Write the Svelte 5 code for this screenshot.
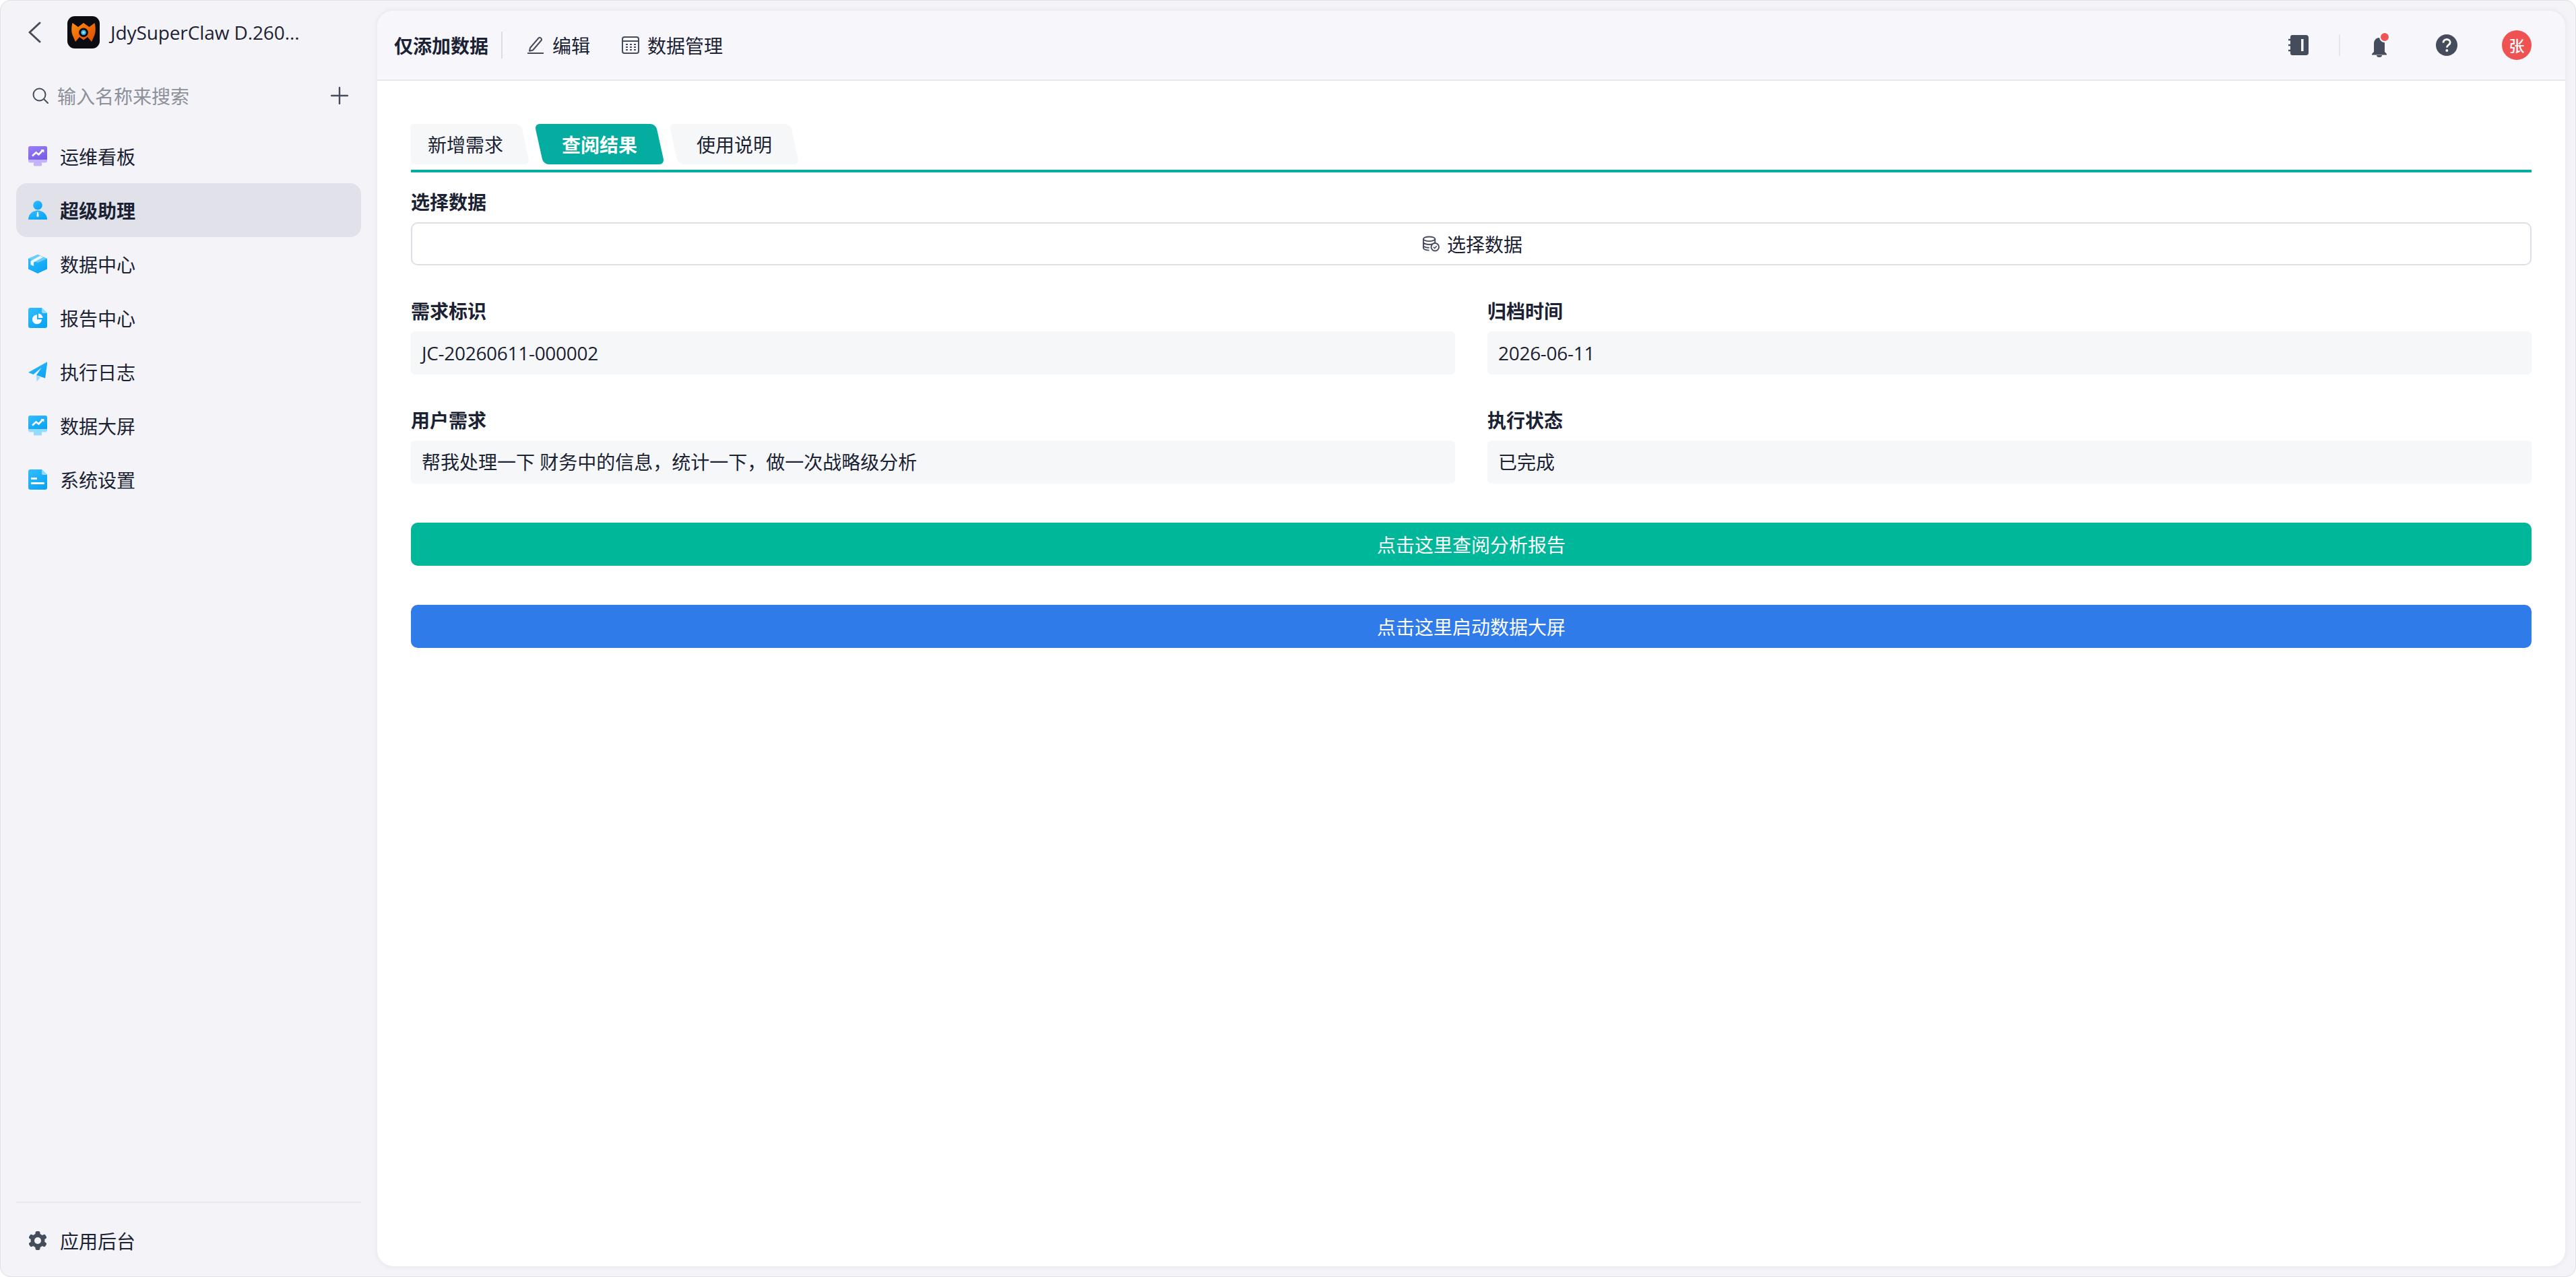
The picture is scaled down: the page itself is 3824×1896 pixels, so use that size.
<script>
  const nav = [
    { name: "运维看板", icon: "monitorPurple" },
    { name: "超级助理", icon: "person", active: true },
    { name: "数据中心", icon: "box" },
    { name: "报告中心", icon: "report" },
    { name: "执行日志", icon: "plane" },
    { name: "数据大屏", icon: "monitorBlue" },
    { name: "系统设置", icon: "doc" },
  ];
  const tabs = ["新增需求", "查阅结果", "使用说明"];
  let activeTab = $state(1);
</script>

{#snippet navIcon(kind)}
  <svg class="nav-icon" viewBox="0 0 28 30">
    {#if kind === "monitorPurple" || kind === "monitorBlue"}
      {@const light = kind === "monitorPurple" ? "#c4b2fb" : "#93dcff"}
      {@const fill = kind === "monitorPurple" ? "url(#grad-purple)" : "url(#grad-blue)"}
      <path d="M8 24h12v4.500a1 1 0 0 1-1 1H9a1 1 0 0 1-1-1z" fill={light} />
      <path d="M0 19h28v2.500a3 3 0 0 1-3 3H3a3 3 0 0 1-3-3z" fill={light} />
      <path d="M2.500 0h23A2.500 2.500 0 0 1 28 2.500V20H0V2.500A2.500 2.500 0 0 1 2.500 0z" fill={fill} />
      <path d="M6 14.500l5.500-5 4 3 6-6.500" fill="none" stroke="#fff" stroke-width="2.600" />
      <path d="M18.500 5h4.800v4.800z" fill="#fff" />
    {:else if kind === "person"}
      <circle cx="14" cy="7.700" r="6.800" fill="url(#grad-blue)" />
      <path d="M0 29C0 20.500 7 15.500 14 15.500S28 20.500 28 29z" fill="url(#grad-blue)" />
      <path d="M14 17.500l1.500 1.500-.6 1 .9 3.800-1.800 1.700-1.800-1.700.9-3.800-.6-1z" fill="#fff" />
    {:else if kind === "box"}
      <path d="M14 1l14 6v15.500L14 29 0 22.500V7z" fill="url(#grad-blue)" />
      <path d="M0 7l14-6 14 6-14 6z" fill="#6ccdfb" />
      <path d="M3.500 10.500L17.500 3l4.500 1.800L8 12.500v5.500l-4.500-2z" fill="#fff" opacity=".92" />
    {:else if kind === "report"}
      <path d="M3 0h17l8 8v19a3 3 0 0 1-3 3H3a3 3 0 0 1-3-3V3a3 3 0 0 1 3-3z" fill="url(#grad-blue)" />
      <path d="M20 0l8 8h-6a2 2 0 0 1-2-2z" fill="#93dcff" />
      <path d="M13 10.200v7h7a7 7 0 1 1-7-7z" fill="#fff" />
      <path d="M15 8.500a7 7 0 0 1 6.500 6.500H15z" fill="#fff" />
    {:else if kind === "plane"}
      <path d="M12 20l.5 9.500 5.500-6z" fill="#93dcff" />
      <path d="M28.500 0L0 16l7.500 3L19.500 9l-7.500 11 13 4.500z" fill="url(#grad-blue)" />
    {:else if kind === "doc"}
      <path d="M3 0h17l8 8v19a3 3 0 0 1-3 3H3a3 3 0 0 1-3-3V3a3 3 0 0 1 3-3z" fill="url(#grad-blue)" />
      <path d="M20 0l8 8h-6a2 2 0 0 1-2-2z" fill="#93dcff" />
      <rect x="4" y="12" width="9" height="3" rx="1" fill="#fff" />
      <rect x="4" y="19" width="20" height="3" rx="1" fill="#fff" />
    {/if}
  </svg>
{/snippet}

<svg class="defs" width="0" height="0">
  <defs>
    <linearGradient id="grad-blue" x1="0" y1="0" x2="0.7" y2="1">
      <stop offset="0" stop-color="#35bdff" />
      <stop offset="1" stop-color="#0ba4f3" />
    </linearGradient>
    <linearGradient id="grad-purple" x1="0" y1="0" x2="0.5" y2="1">
      <stop offset="0" stop-color="#9a7ff8" />
      <stop offset="1" stop-color="#7c5fe8" />
    </linearGradient>
    <linearGradient id="grad-logo" x1="0" y1="0" x2="1" y2="1">
      <stop offset="0" stop-color="#ff8a12" />
      <stop offset="1" stop-color="#dc4a00" />
    </linearGradient>
  </defs>
</svg>

<div class="window">
  <aside class="sidebar">
    <div class="app-head">
      <svg class="back" viewBox="0 0 20 32">
        <path d="M18 2L3 16l15 14" fill="none" stroke="#454d5c" stroke-width="3" stroke-linecap="round" stroke-linejoin="round" />
      </svg>
      <svg class="logo" viewBox="0 0 48 48">
        <rect width="48" height="48" rx="11" fill="#0b0d13" />
        <path d="M7.500 10L16 16l8-6 8.500 6 8-6c2 8 1.500 14-.5 19l-4 9-6-7-6 4.500-6-4.500-6 7-4-9c-2-5-2.500-11-.5-19z" fill="url(#grad-logo)" />
        <circle cx="24" cy="24.300" r="6.800" fill="#0b0d13" />
        <circle cx="24" cy="24.300" r="3.800" fill="#35b6e8" />
        <circle cx="24" cy="24.300" r="1.700" fill="#a8e6fb" />
      </svg>
      <span class="app-title">JdySuperClaw D.260...</span>
    </div>

    <div class="search">
      <svg class="search-icon" viewBox="0 0 24 24">
        <circle cx="10.500" cy="10.500" r="9" fill="none" stroke="#454d5c" stroke-width="2" />
        <path d="M17 17l6 6" stroke="#454d5c" stroke-width="2" stroke-linecap="round" />
      </svg>
      <span class="placeholder">输入名称来搜索</span>
      <svg class="plus" viewBox="0 0 26 26">
        <path d="M13 1v24M1 13h24" stroke="#454d5c" stroke-width="2.400" stroke-linecap="round" />
      </svg>
    </div>

    <nav class="nav">
      {#each nav as item}
        <div class="nav-item" class:active={item.active}>
          {@render navIcon(item.icon)}
          <span>{item.name}</span>
        </div>
      {/each}
    </nav>

    <div class="side-foot">
      <div class="nav-item">
        <svg class="nav-icon" viewBox="0 0 28 30">
          <circle cx="14" cy="15" r="10.500" fill="#454d5c" />
          {#each [0, 60, 120] as angle}
            <rect x="10.500" y="1" width="7" height="28" rx="2.500" fill="#454d5c" transform="rotate({angle} 14 15)" />
          {/each}
          <circle cx="14" cy="15" r="5" fill="#f3f3f8" />
        </svg>
        <span>应用后台</span>
      </div>
    </div>
  </aside>

  <div class="main-wrap">
    <main class="card">
      <header class="topbar">
        <strong class="page-name">仅添加数据</strong>
        <span class="vline"></span>
        <button class="tool">
          <svg class="tool-icon" viewBox="0 0 26 26">
            <path d="M5 17L17.500 2.500a2 2 0 0 1 3-.2l.8.7a2 2 0 0 1 .2 3L9 20.500l-5 1.200z" fill="none" stroke="#454d5c" stroke-width="2" stroke-linejoin="round" />
            <path d="M1 25h24" stroke="#454d5c" stroke-width="2" />
          </svg>
          编辑
        </button>
        <button class="tool">
          <svg class="tool-icon" viewBox="0 0 26 26">
            <rect x="1" y="1" width="24" height="24" rx="3" fill="none" stroke="#454d5c" stroke-width="2" />
            <path d="M1 7h24" stroke="#454d5c" stroke-width="2" />
            <path d="M6 12h3M12 12h3M18 12h3M6 16h3M12 16h3M18 16h3M6 20h3M12 20h3M18 20h3" stroke="#454d5c" stroke-width="2" />
          </svg>
          数据管理
        </button>

        <div class="top-right">
          <svg class="ic-notebook" viewBox="0 0 30 30">
            <path d="M6 0h20a4 4 0 0 1 4 4v22a4 4 0 0 1-4 4H6a3 3 0 0 1-3-3V3a3 3 0 0 1 3-3z" fill="#454d5c" />
            <path d="M0 7h5M0 15h5M0 23h5" stroke="#454d5c" stroke-width="2.500" />
            <rect x="19" y="6" width="3.500" height="18" fill="#f6f6fb" />
          </svg>
          <span class="vline light"></span>
          <span class="bell">
            <svg viewBox="0 0 24 32">
              <path d="M12 3c5 0 8 4 8 9v12l3 3v1.500H1V27l3-3V12c0-5 3-9 8-9z" fill="#454d5c" />
              <path d="M8 29h8a4 3 0 0 1-8 0z" fill="#454d5c" />
            </svg>
            <i class="dot"></i>
          </span>
          <svg class="ic-help" viewBox="0 0 32 32">
            <circle cx="16" cy="16" r="16" fill="#454d5c" />
            <path d="M11 12.500c0-3 2.300-5 5.200-5s5 1.800 5 4.400c0 3.800-4.900 3.900-4.900 7.600" fill="none" stroke="#fff" stroke-width="2.800" />
            <circle cx="16.300" cy="24" r="1.900" fill="#fff" />
          </svg>
          <span class="avatar">张</span>
        </div>
      </header>

      <section class="content">
        <div class="tabs">
          {#each tabs as tab, i}
            <button class="tab" class:first={i === 0} class:on={activeTab === i} onclick={() => (activeTab = i)}>
              <span>{tab}</span>
            </button>
          {/each}
        </div>

        <div class="block">
          <div class="label">选择数据</div>
          <button class="pick">
            <svg class="pick-icon" viewBox="0 0 26 24">
              <ellipse cx="10" cy="4.500" rx="9" ry="3.500" fill="none" stroke="#454d5c" stroke-width="2" />
              <path d="M1 4.500v14c0 2 4 3.500 9 3.500M1 9.500c0 2 4 3.500 9 3.500s9-1.500 9-3.500M1 14.500c0 2 4 3.500 9 3.500M19 4.500v6" fill="none" stroke="#454d5c" stroke-width="2" />
              <circle cx="19" cy="17" r="6" fill="#fff" stroke="#454d5c" stroke-width="2" />
              <path d="M16.500 17l2 2 3-3.500" fill="none" stroke="#454d5c" stroke-width="1.600" />
            </svg>
            选择数据
          </button>
        </div>

        <div class="grid">
          <div>
            <div class="label">需求标识</div>
            <div class="field code">JC-20260611-000002</div>
          </div>
          <div>
            <div class="label">归档时间</div>
            <div class="field code">2026-06-11</div>
          </div>
          <div>
            <div class="label">用户需求</div>
            <div class="field">帮我处理一下 财务中的信息，统计一下，做一次战略级分析</div>
          </div>
          <div>
            <div class="label">执行状态</div>
            <div class="field">已完成</div>
          </div>
        </div>

        <button class="action green">点击这里查阅分析报告</button>
        <button class="action blue">点击这里启动数据大屏</button>
      </section>
    </main>
  </div>
</div>

<style>
  :global(body) {
    margin: 0;
    background: #fff;
    font-family: "Open Sans", "Noto Sans CJK SC", sans-serif;
    font-size: 28px;
    color: #1a2233;
  }

  .defs {
    position: absolute;
  }

  button {
    font: inherit;
    color: inherit;
    border: none;
    background: none;
    padding: 0;
  }

  .window {
    display: flex;
    height: 1896px;
    box-sizing: border-box;
    background: #f3f3f8;
    border-radius: 16px;
    box-shadow: inset 0 0 0 1px #e2e2e6;
    overflow: hidden;
  }

  .sidebar {
    width: 560px;
    flex: none;
    box-sizing: border-box;
    padding: 0 24px;
    display: flex;
    flex-direction: column;
  }

  .app-head {
    height: 96px;
    display: flex;
    align-items: center;
    padding-left: 17px;
  }

  .back {
    width: 20px;
    height: 32px;
    margin-right: 39px;
  }

  .logo {
    width: 48px;
    height: 48px;
    margin-right: 16px;
  }

  .app-title {
    white-space: nowrap;
    letter-spacing: -0.1px;
  }

  .search {
    height: 92px;
    margin-bottom: 4px;
    display: flex;
    align-items: center;
    padding: 0 19px 0 24px;
  }

  .search-icon {
    width: 24px;
    height: 24px;
    margin-right: 13px;
  }

  .placeholder {
    color: #8b909a;
    flex: 1;
  }

  .plus {
    width: 26px;
    height: 26px;
  }

  .nav-item {
    height: 80px;
    display: flex;
    align-items: center;
    padding-left: 18px;
    border-radius: 16px;
  }

  .nav-item.active {
    background: #e0e1e9;
    font-weight: 700;
  }

  .nav-icon {
    width: 28px;
    height: 30px;
    margin-right: 19px;
    flex: none;
  }

  .side-foot {
    margin-top: auto;
    border-top: 2px solid #e8e8ed;
    padding: 16px 0 14px;
  }

  .main-wrap {
    flex: 1;
    padding: 16px 16px 16px 0;
    display: flex;
    min-width: 0;
  }

  .card {
    flex: 1;
    background: #fff;
    border-radius: 24px;
    box-shadow: 0 0 8px rgba(40, 40, 70, 0.08);
    overflow: hidden;
    display: flex;
    flex-direction: column;
  }

  .topbar {
    height: 104px;
    box-sizing: border-box;
    flex: none;
    display: flex;
    align-items: center;
    padding: 0 50px 0 25px;
    background: #f6f6fb;
    border-bottom: 2px solid #e8e8ee;
  }

  .page-name {
    font-weight: 700;
  }

  .vline {
    width: 2px;
    height: 40px;
    background: #dcdde3;
    margin: 0 36px 0 19px;
  }

  .vline.light {
    height: 32px;
    background: #e6e6ec;
    margin: 0;
  }

  .tool {
    display: flex;
    align-items: center;
    margin-right: 47px;
  }

  .tool-icon {
    width: 26px;
    height: 26px;
    margin-right: 12px;
  }

  .top-right {
    margin-left: auto;
    display: flex;
    align-items: center;
  }

  .ic-notebook {
    width: 30px;
    height: 30px;
    margin-right: 45px;
  }

  .bell {
    position: relative;
    display: block;
    width: 24px;
    height: 32px;
    margin: 4px 72px 0 46px;
  }

  .bell svg {
    display: block;
    width: 24px;
    height: 32px;
  }

  .dot {
    position: absolute;
    top: -6px;
    right: -4px;
    width: 12px;
    height: 12px;
    background: #f05454;
    border: 2px solid #fff;
    border-radius: 50%;
  }

  .ic-help {
    width: 32px;
    height: 32px;
    margin-right: 66px;
  }

  .avatar {
    width: 44px;
    height: 44px;
    border-radius: 50%;
    background: #ee5253;
    color: #fff;
    font-size: 23px;
    font-weight: 500;
    display: flex;
    align-items: center;
    justify-content: center;
  }

  .content {
    padding: 64px 50px 0;
    display: flex;
    flex-direction: column;
  }

  .tabs {
    display: flex;
    gap: 12px;
    padding-bottom: 8px;
    border-bottom: 4px solid #05ada0;
  }

  .tab {
    position: relative;
    width: 188px;
    height: 60px;
    display: flex;
    align-items: center;
    justify-content: center;
  }

  .tab::before {
    content: "";
    position: absolute;
    inset: 0 4px;
    background: #f6f7f9;
    border-radius: 8px;
    transform: skewX(12.5deg);
  }

  .tab.first {
    width: 174px;
    justify-content: flex-start;
    padding-left: 25px;
    box-sizing: border-box;
  }

  .tab.first::after {
    content: "";
    position: absolute;
    left: 0;
    top: 0;
    bottom: 0;
    width: 60px;
    background: #f6f7f9;
    border-radius: 8px;
  }

  .tab span {
    position: relative;
    z-index: 1;
  }

  .tab.on {
    color: #fff;
    font-weight: 700;
  }

  .tab.on::before {
    background: #05ada0;
  }

  .label {
    height: 36px;
    line-height: 36px;
    margin-bottom: 12px;
    font-weight: 700;
  }

  .block {
    margin: 26px 0 50px;
  }

  .pick {
    width: 100%;
    height: 64px;
    box-sizing: border-box;
    border: 2px solid #dcdfe6;
    border-radius: 10px;
    background: #fff;
    display: flex;
    align-items: center;
    justify-content: center;
    padding-left: 4px;
  }

  .pick-icon {
    width: 25px;
    height: 24px;
    margin-right: 11px;
  }

  .grid {
    display: grid;
    grid-template-columns: 1fr 1fr;
    gap: 50px 48px;
  }

  .field {
    height: 64px;
    line-height: 64px;
    padding: 0 16px;
    background: #f6f7f9;
    border-radius: 6px;
  }

  .code {
    letter-spacing: -0.3px;
  }

  .action {
    height: 64px;
    border-radius: 10px;
    color: #fff;
    margin-top: 58px;
  }

  .green {
    background: #00b899;
  }

  .blue {
    background: #307bea;
  }
</style>
